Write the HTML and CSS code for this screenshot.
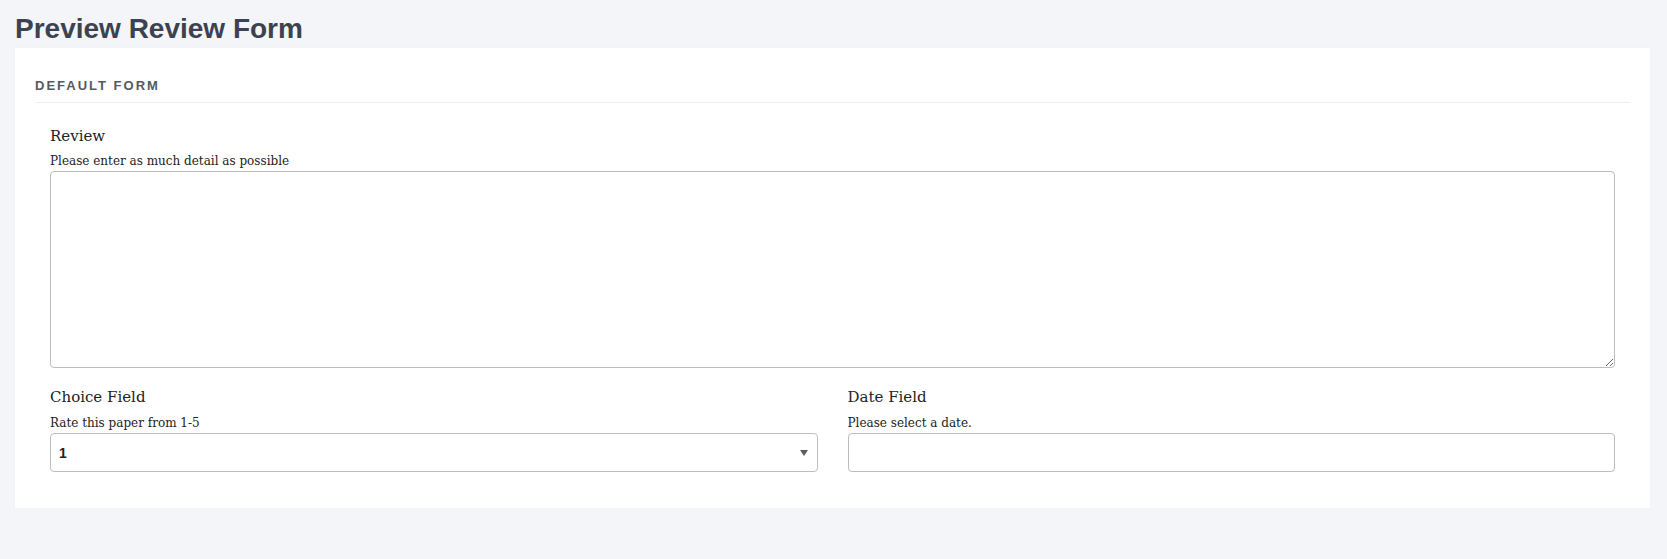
FILE: index.html
```html
<!DOCTYPE html>
<html lang="en">
<head>
<meta charset="utf-8">
<title>Preview Review Form</title>
<link rel="stylesheet" href="styles.css">
</head>
<body>
<div class="page">
  <h1 class="page-title">Preview Review Form</h1>
  <div class="card">
    <div class="card-header">Default Form</div>
    <form class="form">
      <div class="field">
        <label class="field-label" for="review">Review</label>
        <div class="field-help">Please enter as much detail as possible</div>
        <textarea id="review" class="textarea"></textarea>
      </div>
      <div class="row">
        <div class="field">
          <label class="field-label" for="choice">Choice Field</label>
          <div class="field-help">Rate this paper from 1-5</div>
          <div class="select-wrap">
            <select id="choice" class="select">
              <option>1</option>
              <option>2</option>
              <option>3</option>
              <option>4</option>
              <option>5</option>
            </select>
          </div>
        </div>
        <div class="field">
          <label class="field-label" for="date">Date Field</label>
          <div class="field-help">Please select a date.</div>
          <input id="date" class="input" type="text">
        </div>
      </div>
    </form>
  </div>
</div>
</body>
</html>
```
FILE: styles.css
```css
* { box-sizing: border-box; }
html, body {
  margin: 0;
  background: #f4f5f9;
}
.page {
  padding: 12px 17px 40px 15px;
}
.page-title {
  margin: 0 0 2px 0;
  font-family: "Liberation Sans", Arial, sans-serif;
  font-size: 28px;
  line-height: 34px;
  font-weight: 700;
  color: #3d4250;
}
.card {
  background: #ffffff;
  padding: 28px 20px 36px 20px;
  box-shadow: 0 0 2px rgba(0,0,0,0.03);
}
.card-header {
  font-family: "Liberation Sans", Arial, sans-serif;
  font-size: 13px;
  line-height: 20px;
  font-weight: 700;
  letter-spacing: 2px;
  text-transform: uppercase;
  color: #55595f;
  padding-bottom: 6px;
  border-bottom: 1px solid #eeeff1;
}
.form {
  padding: 22px 15px 0 15px;
  display: flex;
  flex-direction: column;
  gap: 18px;
}
.row {
  display: flex;
  gap: 30px;
}
.row .field { flex: 1 1 0; min-width: 0; }
.row .field-help { margin-top: 5.5px; }
.field {
  display: flex;
  flex-direction: column;
}
.field-label {
  font-family: "DejaVu Serif", Georgia, serif;
  font-size: 15px;
  line-height: 22px;
  color: #222;
}
.field-help {
  font-family: "DejaVu Serif", Georgia, serif;
  font-size: 12px;
  line-height: 18px;
  color: #222;
  margin-top: 4.5px;
  margin-bottom: 1.5px;
}
.textarea {
  display: block;
  width: 100%;
  height: 197px;
  border: 1px solid #bcbcc0;
  border-radius: 4px;
  background: #fff;
  padding: 6px;
  font-family: "Liberation Sans", Arial, sans-serif;
  font-size: 14px;
  resize: vertical;
}
.select-wrap {
  position: relative;
}
.select-wrap::after {
  content: "";
  position: absolute;
  right: 10px;
  top: 17px;
  border-left: 4px solid transparent;
  border-right: 4px solid transparent;
  border-top: 6px solid #5a5d63;
  pointer-events: none;
}
.select, .input {
  display: block;
  width: 100%;
  height: 39px;
  border: 1px solid #bcbcc0;
  border-radius: 4px;
  background: #fff;
  padding: 0 8px;
  font-family: "Liberation Sans", Arial, sans-serif;
  font-size: 14px;
  font-weight: 700;
  color: #222;
  -webkit-appearance: none;
  appearance: none;
  outline: none;
}
```
